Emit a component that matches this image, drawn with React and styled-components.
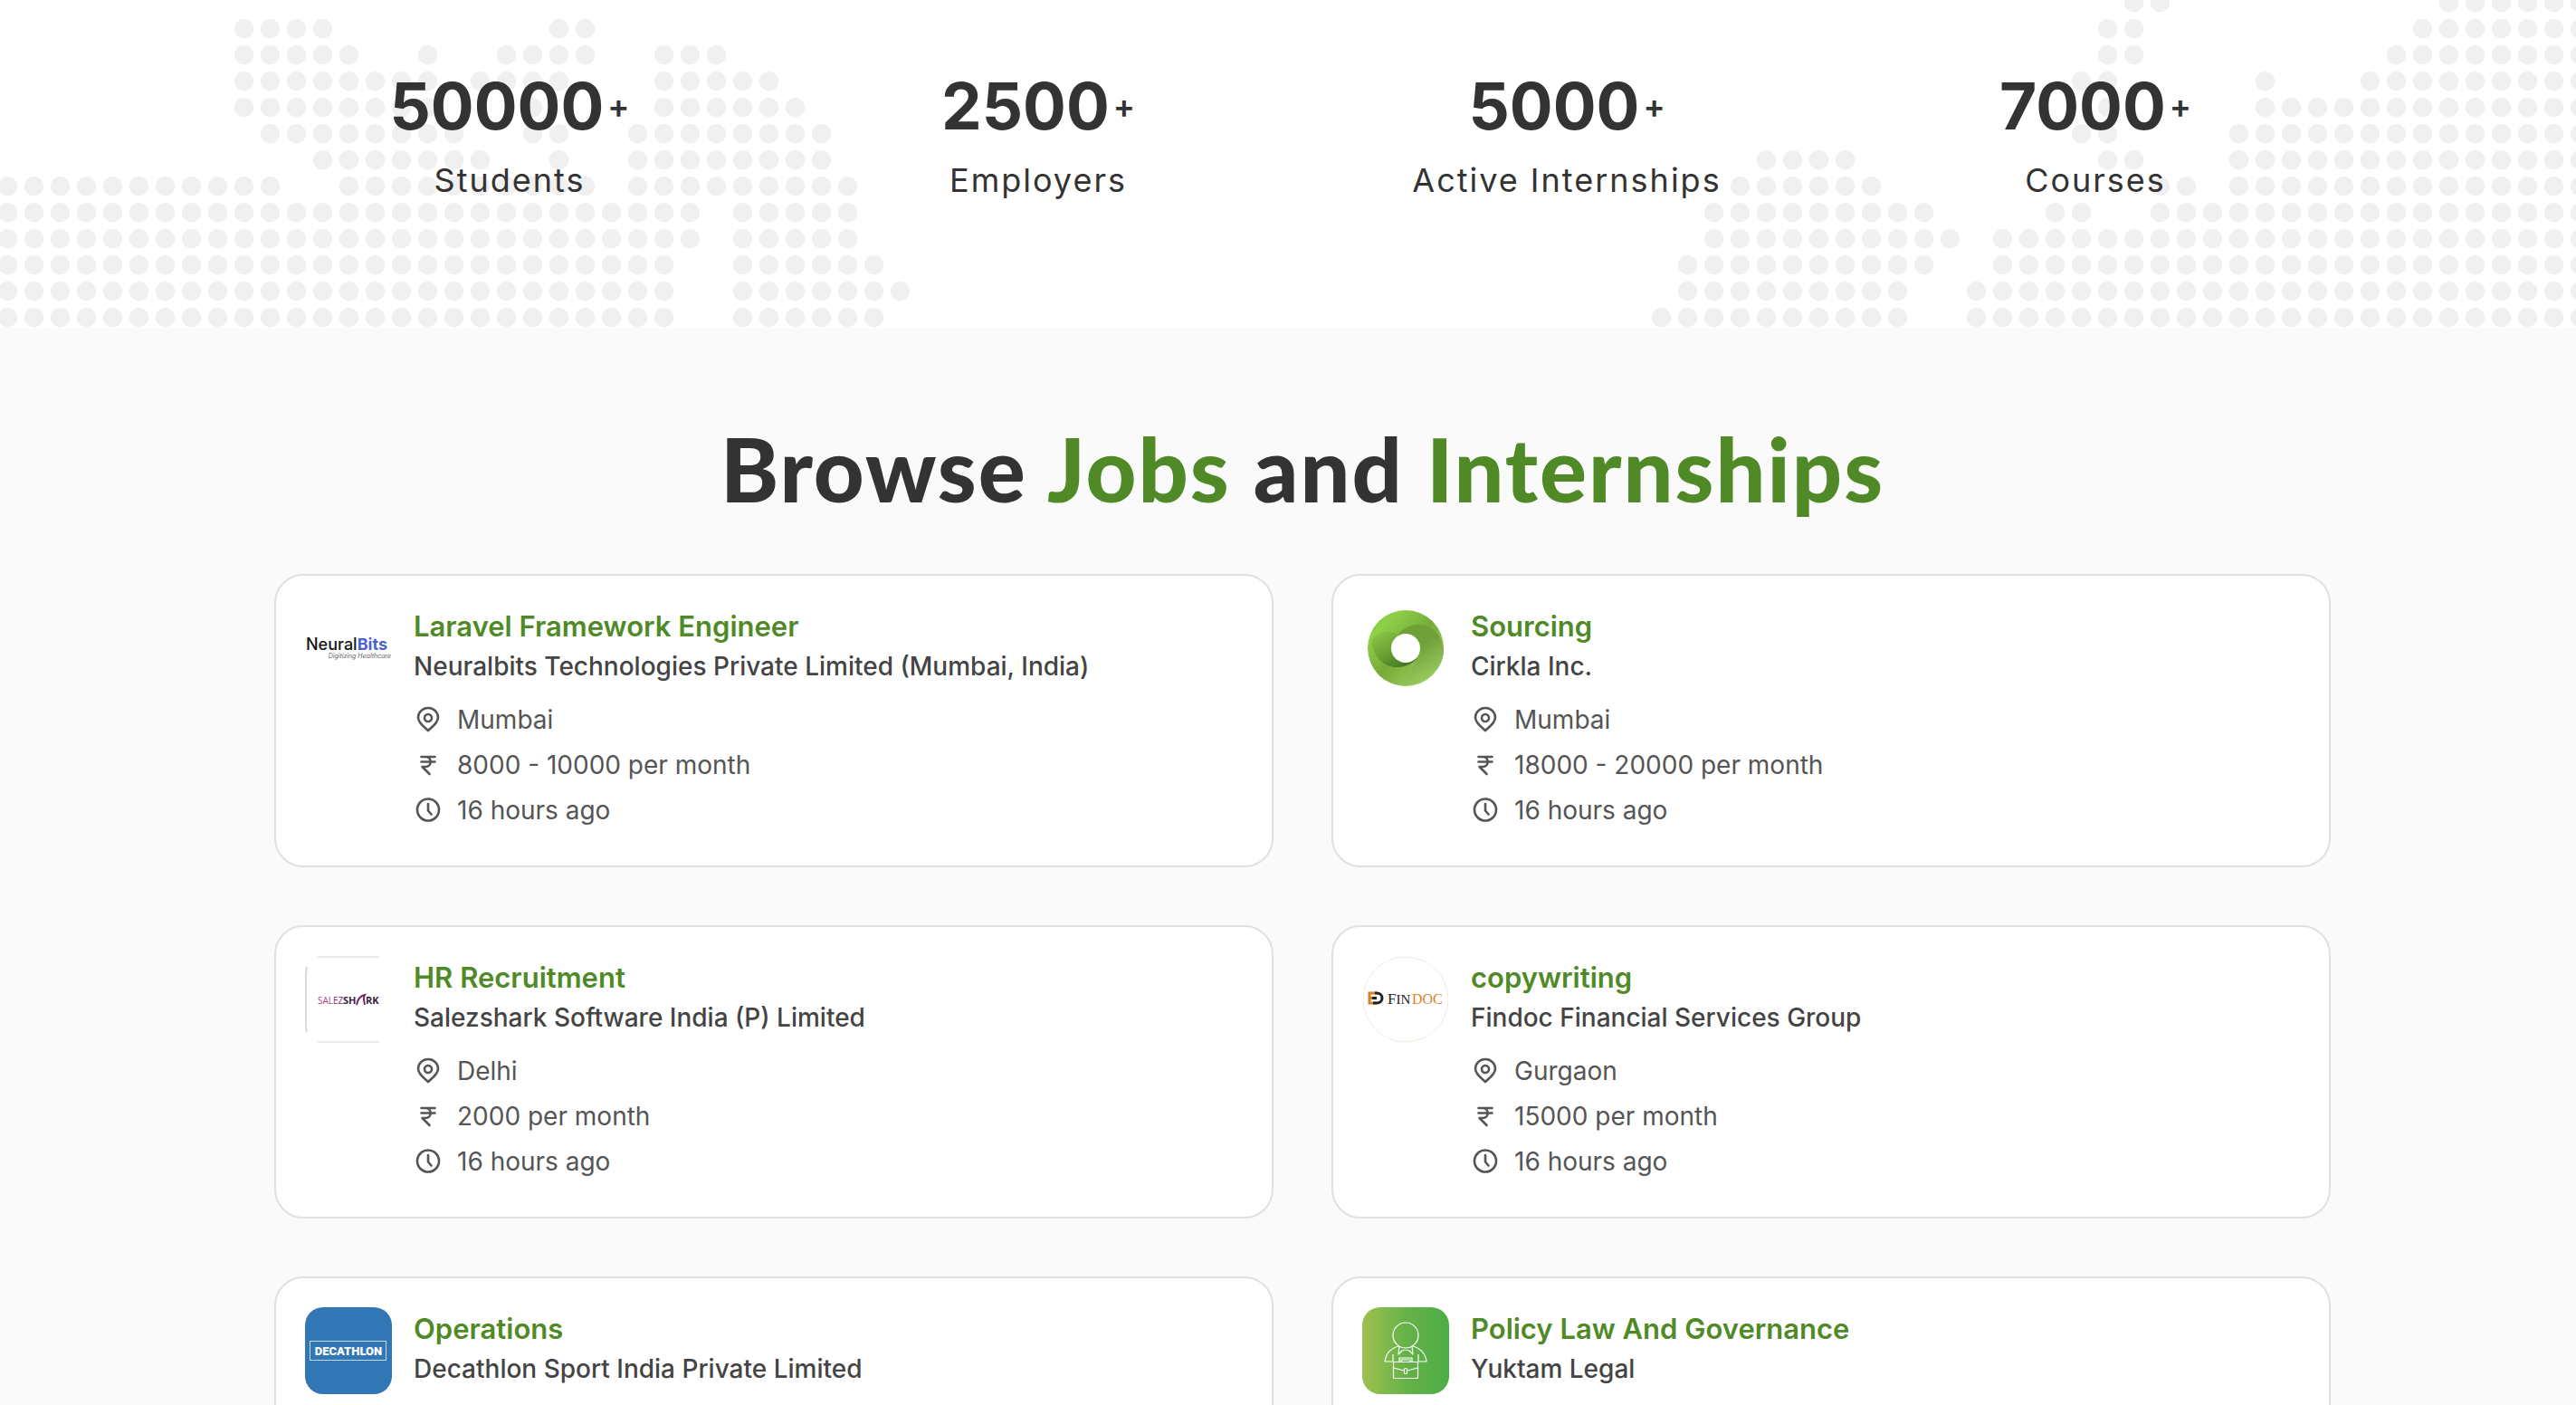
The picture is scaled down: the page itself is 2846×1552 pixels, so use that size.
import React from "react";
import styled, { createGlobalStyle } from "styled-components";

const GlobalStyle = createGlobalStyle`
  * { box-sizing: border-box; }
  body {
    margin: 0;
    background: #fafafa;
    color: #333333;
    font-family: Inter, "Liberation Sans", sans-serif;
  }
  h1, h2, h3, p, ul { margin: 0; padding: 0; }
`;

/* Runs of dots per row, as [first column, last column] on a 29px grid. */
const DOT_ROWS = [
  [[81, 82], [93, 98]],
  [[9, 12], [21, 22], [80, 81], [92, 98]],
  [[9, 13], [16, 16], [19, 22], [25, 27], [80, 81], [91, 98]],
  [[9, 16], [18, 21], [25, 29], [79, 80], [86, 86], [90, 98]],
  [[9, 16], [20, 20], [25, 30], [80, 80], [86, 98]],
  [[10, 17], [20, 21], [24, 31], [79, 80], [85, 98]],
  [[12, 18], [21, 21], [24, 31], [67, 70], [80, 81], [85, 98]],
  [[0, 10], [13, 22], [24, 32], [66, 71], [82, 83], [85, 98]],
  [[0, 26], [28, 32], [65, 73], [78, 79], [82, 98]],
  [[0, 26], [28, 32], [65, 74], [76, 98]],
  [[0, 25], [28, 33], [64, 73], [76, 98]],
  [[0, 25], [28, 34], [64, 72], [75, 98]],
  [[0, 25], [28, 33], [63, 72], [75, 98]],
];

const StatsBand = styled.section`
  position: relative;
  padding: 74px 0 142px 32px;
  background: #ffffff;
`;

const MapSvg = styled.svg`
  position: absolute;
  inset: 0;
  width: 100%;
  height: 100%;
`;

const StatsGrid = styled.div`
  position: relative;
  display: grid;
  grid-template-columns: repeat(4, 1fr);
  max-width: 2336px;
  margin: 0 auto;
`;

const Stat = styled.div`
  display: flex;
  flex-direction: column;
  align-items: center;
  gap: 18px;
`;

const StatValue = styled.p`
  display: flex;
  align-items: center;
  gap: 4px;
  font-size: 71px;
  font-weight: 700;
  line-height: 86px;
`;

const Plus = styled.span`
  font-size: 36px;
  font-weight: 600;
`;

const StatLabel = styled.p`
  font-size: 36px;
  line-height: 42px;
  letter-spacing: 2px;
`;

const Jobs = styled.section`
  padding: 108px 0 64px 32px;
`;

const Heading = styled.h1`
  font-family: Lato, "Open Sans", sans-serif;
  font-size: 97px;
  font-weight: 900;
  line-height: 96px;
  letter-spacing: 2px;
  text-align: center;
`;

const Accent = styled.span`
  color: #4f8a27;
`;

const CardGrid = styled.div`
  display: grid;
  grid-template-columns: repeat(2, 1fr);
  gap: 64px;
  max-width: 2336px;
  margin: 68px auto 0;
  padding: 0 32px;
`;

const Card = styled.article`
  display: flex;
  gap: 24px;
  min-height: 324px;
  padding: 32px;
  background: #ffffff;
  border: 2px solid #e0e0e0;
  border-radius: 32px;
`;

const Logo = styled.svg`
  flex: none;
  width: 96px;
  height: 96px;
`;

const Details = styled.div`
  padding-top: 4px;
`;

const JobTitle = styled.h2`
  font-size: 31px;
  font-weight: 600;
  line-height: 40px;
`;

const JobLink = styled.a`
  color: #4f8a27;
  text-decoration: none;
`;

const Company = styled.h3`
  margin-top: 4px;
  color: #444444;
  font-size: 28px;
  font-weight: 500;
  line-height: 40px;
`;

const Facts = styled.ul`
  margin-top: 14px;
  list-style: none;
`;

const Fact = styled.li`
  display: flex;
  align-items: center;
  gap: 16px;
  color: #555555;
  font-size: 28px;
  line-height: 50px;
`;

const FactIcon = styled.svg`
  flex: none;
  width: 32px;
  height: 32px;
  fill: none;
  stroke: currentColor;
  stroke-width: 2.6;
  stroke-linecap: round;
  stroke-linejoin: round;
`;

function PinIcon() {
  return (
    <FactIcon viewBox="0 0 32 32" aria-hidden="true">
      <path d="M16 28C12.500 24.500 5 20 5 13.500a11 10.500 0 0 1 22 0C27 20 19.500 24.500 16 28z" />
      <circle cx="16" cy="14" r="4" />
    </FactIcon>
  );
}

function RupeeIcon() {
  return (
    <FactIcon viewBox="0 0 32 32" aria-hidden="true">
      <path d="M8.500 7h15M8.500 12.500h15M9 7h4c7.500 0 7.500 11 0 11H9.500l8 8" />
    </FactIcon>
  );
}

function ClockIcon() {
  return (
    <FactIcon viewBox="0 0 32 32" aria-hidden="true">
      <circle cx="16" cy="15.500" r="12" />
      <path d="M16 9v7.500l3.500 4" />
    </FactIcon>
  );
}

function NeuralBitsLogo() {
  return (
    <Logo viewBox="0 0 96 96" role="img" aria-label="NeuralBits">
      <text x="1" y="50" fontSize="18" fontWeight="500" fill="#151515">
        Neural<tspan fontWeight="700" fill="#4a5fd8">Bits</tspan>
      </text>
      <text x="95" y="59" textAnchor="end" fontSize="7" fontStyle="italic" fill="#666666">
        Digitizing Healthcare
      </text>
    </Logo>
  );
}

function CirklaLogo() {
  return (
    <Logo viewBox="0 0 96 96" role="img" aria-label="Cirkla">
      <defs>
        <linearGradient id="cirklaOuter" x1="0" y1="0" x2="1" y2="1">
          <stop offset="0" stopColor="#86c440" />
          <stop offset="0.200" stopColor="#8fd049" />
          <stop offset="0.500" stopColor="#76ab38" />
          <stop offset="0.850" stopColor="#9fce62" />
          <stop offset="1" stopColor="#93c452" />
        </linearGradient>
        <linearGradient id="cirklaRight" x1="0.200" y1="0" x2="0.700" y2="1">
          <stop offset="0" stopColor="#6ea036" />
          <stop offset="0.400" stopColor="#70a03a" />
          <stop offset="1" stopColor="#9fce62" />
        </linearGradient>
        <linearGradient id="cirklaLeft" x1="0" y1="0" x2="0.800" y2="1">
          <stop offset="0" stopColor="#8bcb45" />
          <stop offset="0.500" stopColor="#6fa335" />
          <stop offset="1" stopColor="#3f7420" />
        </linearGradient>
      </defs>
      <circle cx="48" cy="48" r="42" fill="url(#cirklaOuter)" />
      <path d="M90 50C88 34 78 22 62 22C50 22 40 29 34 42L48 64L60 60L48 88C72 88 90 70 90 50z" fill="url(#cirklaRight)" />
      <path d="M10 40C12 58 24 69 38 69C47 69 54 66 60 60L48 52L40 34C34 28 16 28 10 40z" fill="url(#cirklaLeft)" />
      <circle cx="48" cy="48" r="16" fill="#ffffff" />
    </Logo>
  );
}

function SalezsharkLogo() {
  return (
    <Logo viewBox="0 0 96 96" role="img" aria-label="Salezshark">
      <path d="M14 1H82M14 95H82" stroke="#d8d8d8" strokeWidth="1" />
      <path d="M2 12C1 16 1 18 1 24V72C1 78 1 81 2 84" fill="none" stroke="#d8d8d8" strokeWidth="2" />
      <g fontFamily="Open Sans, sans-serif">
        <text x="14" y="53" fontSize="10" fill="#b0447c">SAL<tspan fill="#7a3564">EZ</tspan></text>
        <text x="42" y="53" fontSize="11" fontWeight="700" fill="#35213f">SH</text>
        <text x="67" y="53" fontSize="11" fontWeight="700" fill="#35213f">RK</text>
      </g>
      <path d="M57 54C58 48 61 44 66 43C64 46 65 50 66 54" fill="none" stroke="#7a2b62" strokeWidth="2" />
    </Logo>
  );
}

function FindocLogo() {
  return (
    <Logo viewBox="0 0 96 96" role="img" aria-label="Findoc">
      <circle cx="48" cy="48" r="47" fill="none" stroke="#f6ebdf" strokeWidth="1" />
      <path d="M16 41H8V52H16M8 46.500H15" fill="none" stroke="#d9822b" strokeWidth="3" />
      <path d="M14 41H16C24 41 24 52 16 52H12M11 46.500H16" fill="none" stroke="#222222" strokeWidth="3" />
      <g fontFamily="Liberation Serif, serif">
        <text x="28" y="53" fontSize="17" fill="#222222">F<tspan fontSize="15">IN</tspan></text>
        <text x="55" y="53" fontSize="16" fill="#d9822b">DOC</text>
      </g>
    </Logo>
  );
}

function DecathlonLogo() {
  return (
    <Logo viewBox="0 0 96 96" role="img" aria-label="Decathlon">
      <rect width="96" height="96" rx="20" fill="#3277b5" />
      <rect x="5.500" y="37.500" width="84" height="21" fill="none" stroke="#c5d9ea" strokeWidth="1" />
      <text x="48" y="53" textAnchor="middle" fontFamily="Roboto, sans-serif" fontSize="13" fontWeight="900" fill="#ffffff">
        DECATHLON
      </text>
    </Logo>
  );
}

function YuktamLogo() {
  return (
    <Logo viewBox="0 0 96 96" role="img" aria-label="Yuktam Legal">
      <defs>
        <linearGradient id="yuktamFill">
          <stop offset="0" stopColor="#9fc14f" />
          <stop offset="0.500" stopColor="#66b248" />
          <stop offset="1" stopColor="#4bad47" />
        </linearGradient>
      </defs>
      <rect width="96" height="96" rx="20" fill="url(#yuktamFill)" />
      <g fill="none" stroke="#ffffff" strokeWidth="1.200" strokeLinejoin="round">
        <circle cx="48" cy="31" r="14" />
        <path d="M41 43L40 52L44 48C46 47 50 47 52 48L56 52L55 43M40 43C30 46 26 52 25 60H34V52M56 43C66 46 70 52 71 60H62V52" />
        <rect x="34.500" y="60.500" width="27" height="18" rx="1" />
        <path d="M41 60V56H55V60M43 60V58H53V60M35 67L46 70M50 70L61 67" />
        <rect x="46.500" y="67.500" width="3" height="6" rx="1" />
      </g>
    </Logo>
  );
}

const STATS = [
  { value: "50000", label: "Students" },
  { value: "2500", label: "Employers" },
  { value: "5000", label: "Active Internships" },
  { value: "7000", label: "Courses" },
];

const JOBS = [
  { title: "Laravel Framework Engineer", company: "Neuralbits Technologies Private Limited (Mumbai, India)", place: "Mumbai", pay: "8000 - 10000 per month", age: "16 hours ago", Mark: NeuralBitsLogo },
  { title: "Sourcing", company: "Cirkla Inc.", place: "Mumbai", pay: "18000 - 20000 per month", age: "16 hours ago", Mark: CirklaLogo },
  { title: "HR Recruitment", company: "Salezshark Software India (P) Limited", place: "Delhi", pay: "2000 per month", age: "16 hours ago", Mark: SalezsharkLogo },
  { title: "copywriting", company: "Findoc Financial Services Group", place: "Gurgaon", pay: "15000 per month", age: "16 hours ago", Mark: FindocLogo },
  { title: "Operations", company: "Decathlon Sport India Private Limited", Mark: DecathlonLogo },
  { title: "Policy Law And Governance", company: "Yuktam Legal", Mark: YuktamLogo },
];

function DotMap() {
  return (
    <MapSvg viewBox="0 0 2846 362" preserveAspectRatio="xMidYMax slice" fill="#f0f0f0" aria-hidden="true">
      {DOT_ROWS.map((runs, row) =>
        runs.flatMap(([from, to]) =>
          Array.from({ length: to - from + 1 }, (_, i) => (
            <circle key={`${row}-${from + i}`} cx={8.5 + 29 * (from + i)} cy={2.7 + 29 * row} r="10.700" />
          ))
        )
      )}
    </MapSvg>
  );
}

function JobCard({ job }) {
  const { title, company, place, pay, age, Mark } = job;
  return (
    <Card>
      <Mark />
      <Details>
        <JobTitle><JobLink href="#">{title}</JobLink></JobTitle>
        <Company>{company}</Company>
        {place && (
          <Facts>
            <Fact><PinIcon />{place}</Fact>
            <Fact><RupeeIcon />{pay}</Fact>
            <Fact><ClockIcon />{age}</Fact>
          </Facts>
        )}
      </Details>
    </Card>
  );
}

export default function App() {
  return (
    <>
      <GlobalStyle />
      <StatsBand>
        <DotMap />
        <StatsGrid>
          {STATS.map((stat) => (
            <Stat key={stat.label}>
              <StatValue>{stat.value}<Plus>+</Plus></StatValue>
              <StatLabel>{stat.label}</StatLabel>
            </Stat>
          ))}
        </StatsGrid>
      </StatsBand>
      <Jobs>
        <Heading>Browse <Accent>Jobs</Accent> and <Accent>Internships</Accent></Heading>
        <CardGrid>
          {JOBS.map((job) => <JobCard key={job.title} job={job} />)}
        </CardGrid>
      </Jobs>
    </>
  );
}
